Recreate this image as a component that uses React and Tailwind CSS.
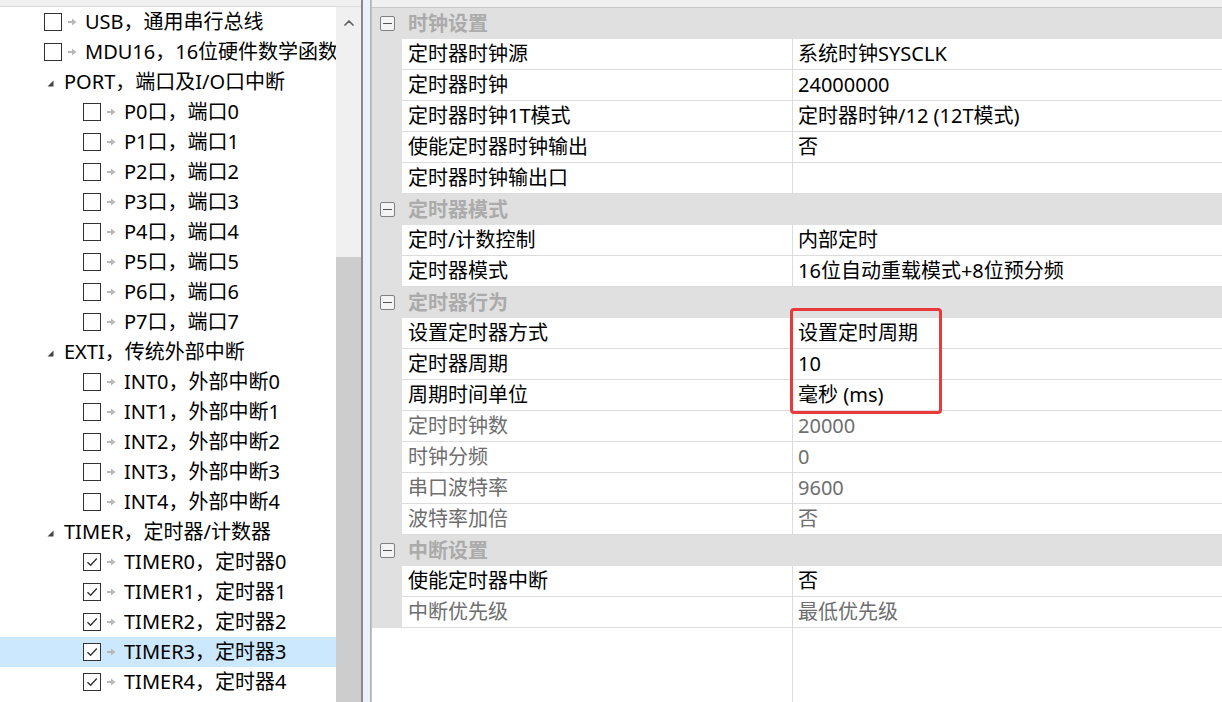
import { ChevronUp } from 'lucide-react';

const tree = [
  { label: 'USB，通用串行总线', kind: 'leaf', indent: 44 },
  { label: 'MDU16，16位硬件数学函数库', kind: 'leaf', indent: 44 },
  { label: 'PORT，端口及I/O口中断', kind: 'group', indent: 47 },
  ...[0, 1, 2, 3, 4, 5, 6, 7].map((i) => ({ label: `P${i}口，端口${i}`, kind: 'leaf', indent: 83 })),
  { label: 'EXTI，传统外部中断', kind: 'group', indent: 47 },
  ...[0, 1, 2, 3, 4].map((i) => ({ label: `INT${i}，外部中断${i}`, kind: 'leaf', indent: 83 })),
  { label: 'TIMER，定时器/计数器', kind: 'group', indent: 47 },
  ...[0, 1, 2, 3, 4].map((i) => ({
    label: `TIMER${i}，定时器${i}`,
    kind: 'leaf',
    indent: 83,
    checked: true,
    selected: i === 3,
  })),
];

const props = [
  { cat: '时钟设置' },
  { name: '定时器时钟源', value: '系统时钟SYSCLK' },
  { name: '定时器时钟', value: '24000000' },
  { name: '定时器时钟1T模式', value: '定时器时钟/12 (12T模式)' },
  { name: '使能定时器时钟输出', value: '否' },
  { name: '定时器时钟输出口', value: '' },
  { cat: '定时器模式' },
  { name: '定时/计数控制', value: '内部定时' },
  { name: '定时器模式', value: '16位自动重载模式+8位预分频' },
  { cat: '定时器行为' },
  { name: '设置定时器方式', value: '设置定时周期' },
  { name: '定时器周期', value: '10' },
  { name: '周期时间单位', value: '毫秒 (ms)' },
  { name: '定时时钟数', value: '20000', off: true },
  { name: '时钟分频', value: '0', off: true },
  { name: '串口波特率', value: '9600', off: true },
  { name: '波特率加倍', value: '否', off: true },
  { cat: '中断设置' },
  { name: '使能定时器中断', value: '否' },
  { name: '中断优先级', value: '最低优先级', off: true },
];

function Arrow() {
  return (
    <svg width="9" height="8" viewBox="0 0 9 8" className="shrink-0">
      <rect x="0" y="3" width="5" height="2" fill="#b8b8b8" />
      <polygon points="4,0.5 8.5,4 4,7.5" fill="#b8b8b8" />
    </svg>
  );
}

function Check({ checked }) {
  return (
    <span className="flex h-[18px] w-[18px] shrink-0 items-center justify-center border border-[#333] bg-white">
      {checked && (
        <svg width="14" height="14" viewBox="0 0 14 14">
          <path d="M2.5 7.2 L5.6 10.2 L11.8 3.6" fill="none" stroke="#333" strokeWidth="1.4" />
        </svg>
      )}
    </span>
  );
}

function TreeRow({ item }) {
  return (
    <div
      className={`flex h-[30px] shrink-0 items-center whitespace-nowrap ${item.selected ? 'bg-[#cce8ff]' : ''}`}
      style={{ paddingLeft: item.indent }}
    >
      {item.kind === 'group' ? (
        <>
          <svg width="7" height="7" viewBox="0 0 7 7" className="mr-[10px] mt-[2px] shrink-0">
            <polygon points="6.5,0.5 6.5,6.5 0.5,6.5" fill="#444" />
          </svg>
          <span>{item.label}</span>
        </>
      ) : (
        <>
          <Check checked={item.checked} />
          <span className="ml-[6px] mr-[8px]">
            <Arrow />
          </span>
          <span>{item.label}</span>
        </>
      )}
    </div>
  );
}

function Minus() {
  return (
    <span className="flex h-[15px] w-[15px] items-center justify-center rounded-[2px] border border-[#808080] bg-[#f4f4f4]">
      <span className="h-px w-[9px] bg-[#555]" />
    </span>
  );
}

export default function App() {
  return (
    <div className="flex h-[702px] w-[1222px] overflow-hidden bg-white font-['Noto_Sans','Noto_Sans_CJK_SC',sans-serif] text-[20px] leading-none text-black">
      {/* 左侧树 + 滚动条 */}
      <div className="flex w-[361px] shrink-0 flex-col">
        <div className="h-[7px] shrink-0 border-b border-[#dcdcdc] bg-[#f0f0f0]" />
        <div className="flex min-h-0 flex-1">
          <div className="flex w-[336px] flex-col overflow-hidden">
            {tree.map((item) => (
              <TreeRow key={item.label} item={item} />
            ))}
          </div>
          <div className="flex w-[25px] flex-col bg-[#f0f0f0]">
            <div className="flex h-[250px] justify-center pt-[8px]">
              <ChevronUp size={16} strokeWidth={2.6} color="#606060" />
            </div>
            <div className="flex-1 bg-[#cdcdcd]" />
          </div>
        </div>
      </div>

      {/* 分隔条 */}
      <div className="w-[10px] shrink-0 border-l-2 border-r border-l-[#8a8a8a] border-r-[#b4b4b4] bg-[#eaf2fa]" />

      {/* 属性表 */}
      <div className="relative flex min-w-0 flex-1 flex-col border-l border-[#c4c4c4] bg-[#f0f0f0]">
        <div className="h-[8px] shrink-0 border-b border-[#c8c8c8]" />
        <div className="flex flex-1 flex-col bg-white">
          {props.map((p, i) =>
            p.cat ? (
              <div key={i} className="flex h-[31px] shrink-0 items-center bg-[#e0e0e0]">
                <div className="flex w-[30px] justify-center">
                  <Minus />
                </div>
                <span className="pl-[6px] font-bold text-[#ababab]">{p.cat}</span>
              </div>
            ) : (
              <div key={i} className={`flex h-[31px] shrink-0 ${p.off ? 'text-[#6e6e6e]' : 'text-black'}`}>
                <div className="w-[30px] shrink-0 bg-[#e0e0e0]" />
                <div className="flex w-[391px] shrink-0 items-center border-r border-b border-[#dcdcdc] pl-[6px] whitespace-nowrap">
                  {p.name}
                </div>
                <div className="flex flex-1 items-center border-b border-[#dcdcdc] pl-[5px] whitespace-nowrap">
                  {p.value}
                </div>
              </div>
            )
          )}
          <div className="flex flex-1">
            <div className="w-[421px] shrink-0 border-r border-[#dcdcdc]" />
            <div className="flex-1" />
          </div>
        </div>

        {/* 红框标注 */}
        <div className="pointer-events-none absolute left-[418px] top-[308px] h-[106px] w-[152px] rounded-[4px] border-[3px] border-[#e8393b]" />
      </div>
    </div>
  );
}
